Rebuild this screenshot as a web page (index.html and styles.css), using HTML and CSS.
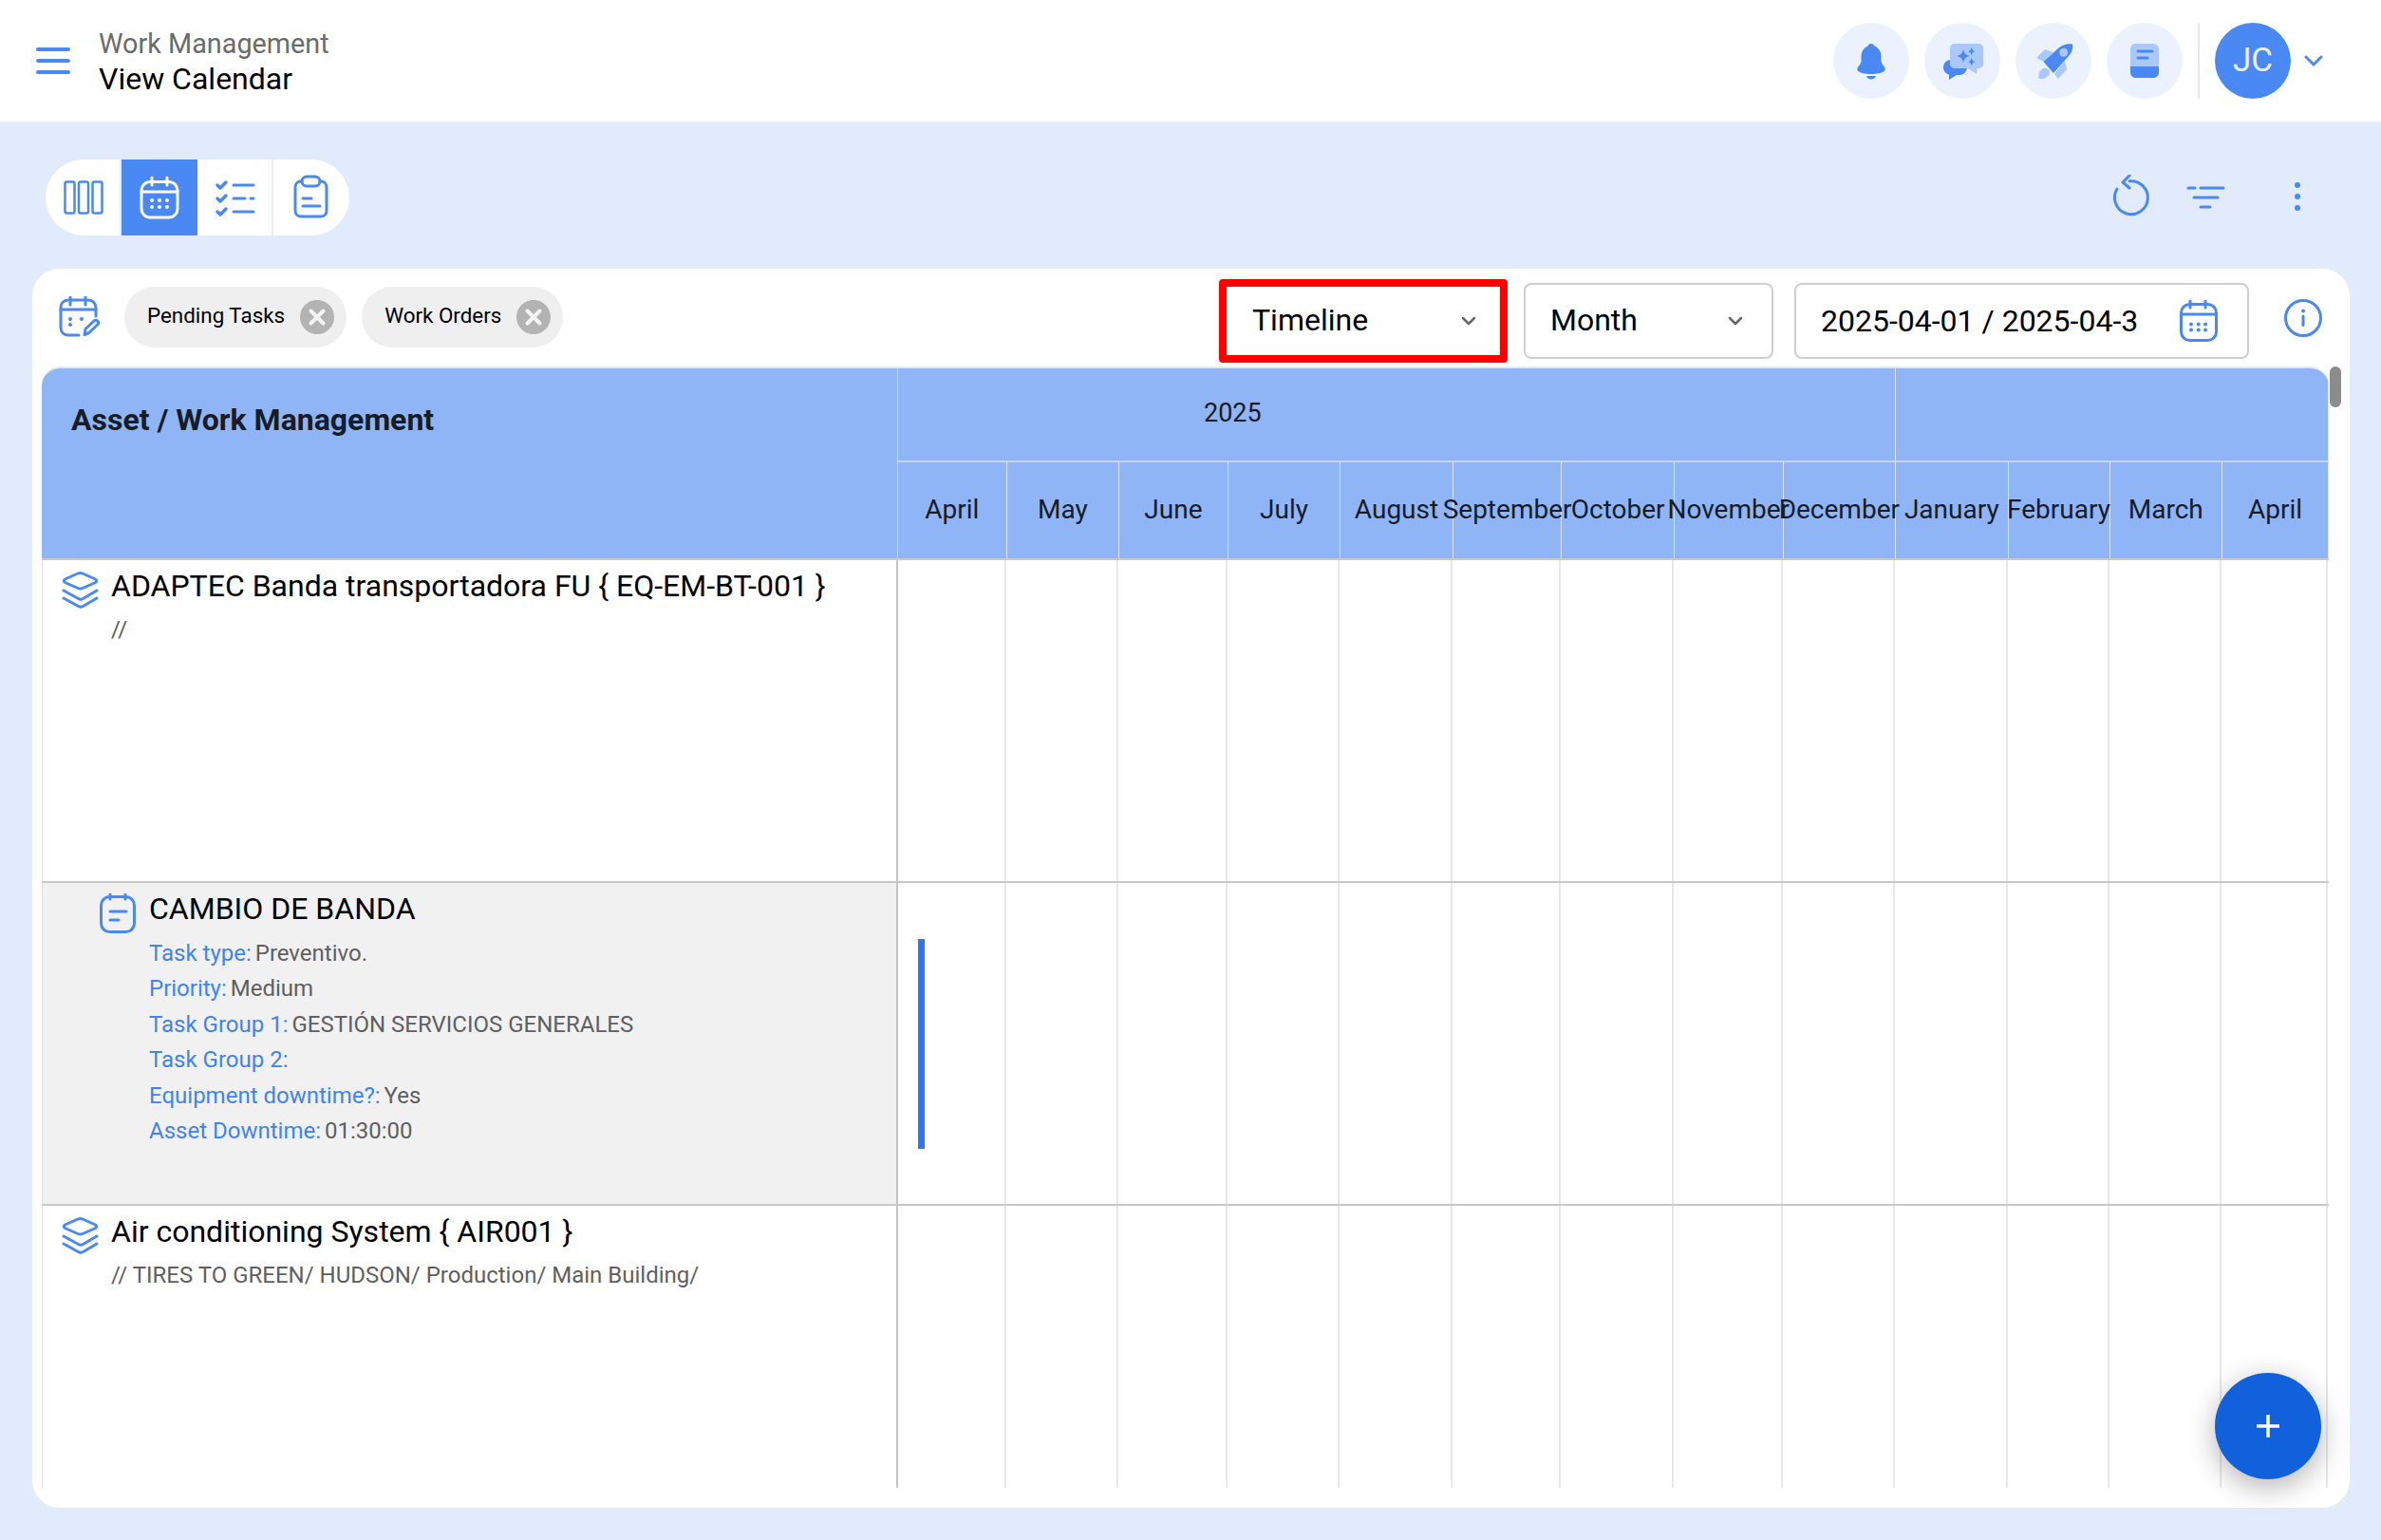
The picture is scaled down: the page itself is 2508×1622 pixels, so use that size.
FILE: index.html
```html
<!DOCTYPE html>
<html lang="en">
<head>
  <meta charset="UTF-8" />
  <title>View Calendar</title>
  <link rel="stylesheet" href="styles.css">
</head>
<body>

  <header class="topbar">
    <svg class="menu-icon" width="36" height="28" viewBox="0 0 36 28"><path d="M2 2h32M2 14h32M2 26h32"/></svg>
    <div class="page-title">
      <div class="crumb">Work Management</div>
      <div class="current">View Calendar</div>
    </div>
    <div class="top-actions">
      <button class="round-btn">
        <svg width="80" height="80" viewBox="0 0 80 80" class="dark"><path d="M40 22c-2 0-3 1.200-3.500 2.500C32.500 26 29.500 30 29.500 35v5c0 3-3 5.500-4 7.500-.8 2 .5 3.500 2.500 4.500 3.500 1.500 8 2 12 2s8.500-.5 12-2c2-1 3.300-2.500 2.500-4.500-1-2-4-4.500-4-7.500v-5c0-5-3-9-7-10.500C43 23.200 42 22 40 22z"/><path d="M35 56h10c-1 2.800-3 3.500-5 3.500s-4-.7-5-3.500z"/></svg>
      </button>
      <button class="round-btn">
        <svg width="80" height="80" viewBox="0 0 80 80">
          <path class="dark" d="M28 39h9c4.500 0 8 3 8 7.500s-3.500 8.500-8 8.500h-3l-8 5v-5.500c-3.500-.5-6-4-6-7.500 0-4.500 3.500-8 8-8z"/>
          <path class="light" d="M32 22h25c3 0 5 2 5 5v16c0 3-2 5-5 5h-1.500l-.5 6-9-6H32c-3 0-5-2-5-5V27c0-3 2-5 5-5z"/>
          <path class="dark" d="M41 28q1 6 7 7q-6 1-7 7q-1-6-7-7q6-1 7-7zM49.700 26q.5 3 3.500 4q-3 1-3.500 4q-.5-3-3.500-4q3-1 3.500-4zM49.700 37q.5 3 3.500 4q-3 1-3.500 4q-.5-3-3.500-4q3-1 3.500-4z"/>
        </svg>
      </button>
      <button class="round-btn">
        <svg width="80" height="80" viewBox="0 0 80 80">
          <path class="light" d="M22 37l9-9 9 3-10.500 10zM54 49l-9 10-4-5 11-14zM25 59c-1.500-4 0-9 4-11 3-1 7 1 7 4 0 4-5 8-11 7z"/>
          <path class="dark" d="M60 22.500c-5-1-10 .5-14 3.500L29.500 41 40 53 56 35c3-3 5-8 4-12.500z"/>
          <circle class="light" cx="50.700" cy="31.300" r="4.500"/>
        </svg>
      </button>
      <button class="round-btn">
        <svg width="80" height="80" viewBox="0 0 80 80">
          <path class="light" d="M31 22h18c3.500 0 6 2.500 6 6v19H25V28c0-3.500 2.500-6 6-6z"/>
          <path class="dark" d="M25 46h30v6c0 3.500-2.500 6-6 6H31c-3.500 0-6-2.500-6-6z"/>
          <path class="dark-line" d="M33 30h15M33 37h10"/>
        </svg>
      </button>
      <div class="top-sep"></div>
      <div class="avatar">JC</div>
      <svg class="avatar-caret" width="20" height="14" viewBox="0 0 20 14"><path d="M2 3l8 8 8-8"/></svg>
    </div>
  </header>

  <div class="toolbar">
    <div class="view-switch">
      <button class="view-btn view-columns">
        <svg width="80" height="80" viewBox="0 0 80 80"><rect x="20.500" y="23.500" width="10" height="33" rx="2"/><rect x="35" y="23.500" width="10" height="33" rx="2"/><rect x="49.500" y="23.500" width="10" height="33" rx="2"/></svg>
      </button>
      <button class="view-btn active">
        <svg width="80" height="80" viewBox="0 0 80 80"><rect x="21" y="23.500" width="38" height="37.500" rx="9"/><path d="M32 19v8M48 19v8M21 34h38"/><path class="dots" d="M32 43h.01M40 43h.01M48 43h.01M32 50h.01M40 50h.01M48 50h.01"/></svg>
      </button>
      <button class="view-btn">
        <svg width="80" height="80" viewBox="0 0 80 80"><path class="checks" d="M21 27l3 3 6-6M21 41l3 3 6-6M21 55l3 3 6-6"/><path d="M38 27h21M38 41h12M56 41h3M38 55h21"/></svg>
      </button>
      <button class="view-btn">
        <svg width="80" height="80" viewBox="0 0 80 80"><path d="M30 23h-1c-4 0-6 3-6 6v25c0 4 3 6 6 6h21c4 0 6-3 6-6V29c0-3-2-6-6-6h-1"/><rect x="30" y="18" width="19" height="10" rx="5"/><path d="M31 41h9M31 49h18"/></svg>
      </button>
    </div>
    <div class="tool-actions">
      <svg width="48" height="48" viewBox="0 0 48 48"><path d="M9 15A17.500 17.500 0 1 0 22 6.800"/><path d="M22 1l-7 7 7 6"/></svg>
      <svg class="tool-filter" width="48" height="48" viewBox="0 0 48 48"><path d="M5 14h7M18 14h24M11 24h25M18 34h10"/></svg>
      <svg class="tool-more" width="20" height="48" viewBox="0 0 20 48"><path d="M10 11h.01M10 23h.01M10 35h.01"/></svg>
    </div>
  </div>

  <main class="card">
    <div class="filters">
      <svg class="cal-edit" width="44" height="44" viewBox="0 0 44 44">
        <path d="M21 41H10c-4.500 0-8-3-8-8V12c0-4.500 3-8 8-8h21c4.500 0 8 3.500 8 8v9"/>
        <path d="M12 1v8M28 1v8M2 14h37"/>
        <path class="cal-dots" d="M12 24h.01M24 24h.01M12 30h.01"/>
        <path d="M27 40.500l1-6 9-8.500c1.200-1.100 3-1 4 .2s.8 2.800-.3 3.800l-9 8.500z"/>
      </svg>
      <div class="chip">
        <span>Pending Tasks</span>
        <svg class="chip-close" width="36" height="36" viewBox="0 0 36 36"><circle cx="18" cy="18" r="18"/><path d="M11.500 11.500l13 13M24.500 11.500l-13 13"/></svg>
      </div>
      <div class="chip">
        <span>Work Orders</span>
        <svg class="chip-close" width="36" height="36" viewBox="0 0 36 36"><circle cx="18" cy="18" r="18"/><path d="M11.500 11.500l13 13M24.500 11.500l-13 13"/></svg>
      </div>

      <div class="select select-mode">
        <span>Timeline</span>
        <svg width="16" height="10" viewBox="0 0 16 10"><path d="M2 2l6 6 6-6"/></svg>
      </div>
      <div class="select select-range">
        <span>Month</span>
        <svg width="16" height="10" viewBox="0 0 16 10"><path d="M2 2l6 6 6-6"/></svg>
      </div>
      <div class="select select-date">
        <span>2025-04-01 / 2025-04-3</span>
        <svg class="date-icon" width="40" height="44" viewBox="0 0 40 44"><rect x="1.500" y="4.500" width="37" height="38" rx="9"/><path d="M11 1v7M27 1v7M1.500 15h37"/><path class="date-dots" d="M12 25.500h.01M19.700 25.500h.01M27 25.500h.01M12 31.500h.01M19.700 31.500h.01M27 31.500h.01"/></svg>
      </div>
      <svg class="info-icon" width="40" height="40" viewBox="0 0 40 40"><circle cx="20" cy="20" r="18.500"/><path d="M20 18v9.500"/><path class="info-dot" d="M20 12.500h.01"/></svg>
    </div>

    <div class="table">
      <div class="thead">
        <div class="th-main">Asset / Work Management</div>
        <div class="th-year year-2025">2025</div>
        <div class="th-year year-2026"></div>
        <div class="th-month">April</div>
        <div class="th-month">May</div>
        <div class="th-month">June</div>
        <div class="th-month">July</div>
        <div class="th-month">August</div>
        <div class="th-month">September</div>
        <div class="th-month">October</div>
        <div class="th-month">November</div>
        <div class="th-month">December</div>
        <div class="th-month">January</div>
        <div class="th-month">February</div>
        <div class="th-month">March</div>
        <div class="th-month">April</div>
      </div>

      <div class="row row-asset">
        <div class="cell-main">
          <div class="row-title">
            <svg class="stack-icon" width="40" height="40" viewBox="0 0 40 40"><path d="M18 3L4.500 9c-1.500 1-1.500 2.500 0 3.500L18 18.500c1.500.7 3.500.7 5 0l13.500-6c1.500-1 1.500-2.500 0-3.500L23 3c-1.500-.7-3.500-.7-5 0z"/><path d="M3 21l15.500 8.500c1.500.8 3.500.8 5 0L38 21"/><path d="M3 29l15.500 8.500c1.500.8 3.500.8 5 0L38 29"/></svg>
            <span>ADAPTEC Banda transportadora FU { EQ-EM-BT-001 }</span>
          </div>
          <div class="row-path">//</div>
        </div>
        <div class="cell"></div><div class="cell"></div><div class="cell"></div><div class="cell"></div><div class="cell"></div><div class="cell"></div><div class="cell"></div><div class="cell"></div><div class="cell"></div><div class="cell"></div><div class="cell"></div><div class="cell"></div><div class="cell"></div>
      </div>

      <div class="row row-task">
        <div class="cell-main">
          <div class="row-title">
            <svg class="task-icon" width="39" height="42" viewBox="0 0 39 42"><rect x="1.500" y="3.500" width="35" height="37" rx="9"/><path d="M11 1v5M27 1v5M11 19h17M11 28h9"/></svg>
            <span>CAMBIO DE BANDA</span>
          </div>
          <ul class="task-info">
            <li><b>Task type:</b> Preventivo.</li>
            <li><b>Priority:</b> Medium</li>
            <li><b>Task Group 1:</b> GESTIÓN SERVICIOS GENERALES</li>
            <li><b>Task Group 2:</b></li>
            <li><b>Equipment downtime?:</b> Yes</li>
            <li><b>Asset Downtime:</b> 01:30:00</li>
          </ul>
        </div>
        <div class="cell"><div class="task-bar"></div></div><div class="cell"></div><div class="cell"></div><div class="cell"></div><div class="cell"></div><div class="cell"></div><div class="cell"></div><div class="cell"></div><div class="cell"></div><div class="cell"></div><div class="cell"></div><div class="cell"></div><div class="cell"></div>
      </div>

      <div class="row row-last">
        <div class="cell-main">
          <div class="row-title">
            <svg class="stack-icon" width="40" height="40" viewBox="0 0 40 40"><path d="M18 3L4.500 9c-1.500 1-1.500 2.500 0 3.500L18 18.500c1.500.7 3.500.7 5 0l13.500-6c1.500-1 1.500-2.500 0-3.500L23 3c-1.500-.7-3.500-.7-5 0z"/><path d="M3 21l15.500 8.500c1.500.8 3.500.8 5 0L38 21"/><path d="M3 29l15.500 8.500c1.500.8 3.500.8 5 0L38 29"/></svg>
            <span>Air conditioning System { AIR001 }</span>
          </div>
          <div class="row-path">// TIRES TO GREEN/ HUDSON/ Production/ Main Building/</div>
        </div>
        <div class="cell"></div><div class="cell"></div><div class="cell"></div><div class="cell"></div><div class="cell"></div><div class="cell"></div><div class="cell"></div><div class="cell"></div><div class="cell"></div><div class="cell"></div><div class="cell"></div><div class="cell"></div><div class="cell"></div>
      </div>
    </div>

    <div class="scroll-thumb"></div>
    <button class="fab">
      <svg width="26" height="26" viewBox="0 0 26 26"><path d="M13 1v24M1 13h24"/></svg>
    </button>
  </main>

</body>
</html>
```

FILE: styles.css
```css
* {
  box-sizing: border-box;
}

body {
  margin: 0;
  height: 1622px;
  overflow: hidden;
  background-color: #e2ebfc;
  font-family: Roboto, "Liberation Sans", sans-serif;
  color: #000;
}

button {
  border: none;
  padding: 0;
  background: none;
  display: block;
}

svg {
  display: block;
  fill: none;
  stroke-linecap: round;
  stroke-linejoin: round;
}

/* top bar */
.topbar {
  display: flex;
  align-items: center;
  height: 128px;
  padding: 0 61px 0 38px;
  background-color: #fff;
}

.menu-icon {
  stroke: #4a89f3;
  stroke-width: 4;
}

.page-title {
  margin-left: 30px;
  padding-top: 2px;
}

.crumb {
  font-size: 28.800px;
  line-height: 37px;
  color: #6b6b6b;
}

.current {
  font-size: 32px;
  line-height: 37px;
}

.top-actions {
  display: flex;
  align-items: center;
  margin-left: auto;
  gap: 16px;
}

.round-btn {
  width: 80px;
  height: 80px;
  border-radius: 50%;
  background-color: #ebf2fe;
}

.dark {
  fill: #4a89f3;
}

.light {
  fill: #abc8fa;
}

.dark-line {
  stroke: #4a89f3;
  stroke-width: 3;
}

.top-sep {
  width: 2px;
  height: 80px;
  background-color: #e8e8e8;
}

.avatar {
  width: 80px;
  height: 80px;
  border-radius: 50%;
  background-color: #4a89f3;
  color: #e8f0fe;
  font-size: 35px;
  line-height: 80px;
  text-align: center;
}

.avatar-caret {
  margin-left: -2px;
  stroke: #4a89f3;
  stroke-width: 3;
}

/* view switch row */
.toolbar {
  display: flex;
  align-items: center;
  justify-content: space-between;
  height: 154px;
  padding: 40px 78px 34px 48px;
}

.view-switch {
  display: flex;
  width: 320px;
  height: 80px;
  border-radius: 40px;
  overflow: hidden;
  background-color: #fff;
}

.view-btn {
  width: 80px;
  height: 80px;
  border-right: 2px solid #e8effc;
}

.view-btn:last-child {
  border-right: none;
}

.view-btn svg {
  stroke: #4a89f3;
  stroke-width: 3;
}

.view-columns svg {
  stroke-width: 2.500;
}

.view-btn .checks {
  stroke-width: 3.500;
}

.view-btn.active {
  background-color: #4a89f3;
  border-right: none;
}

.view-btn.active svg {
  stroke: #fff;
}

.view-btn .dots {
  stroke-width: 4;
}

.tool-actions {
  display: flex;
  align-items: center;
  gap: 31px;
}

.tool-actions svg {
  stroke: #4a89f3;
  stroke-width: 3;
}

.tool-filter {
  margin-right: 31px;
}

.tool-actions .tool-more {
  stroke-width: 6;
}

/* card */
.card {
  position: relative;
  width: 2443px;
  height: 1307px;
  margin-left: 33px;
  padding: 0 9px 0 10px;
  border: 1px solid #ececec;
  border-radius: 30px;
  background-color: #fff;
}

.filters {
  display: flex;
  align-items: flex-start;
  height: 103px;
  padding-left: 18px;
}

.cal-edit {
  margin-top: 29px;
  margin-right: 25px;
  stroke: #4a89f3;
  stroke-width: 3;
}

.cal-edit .cal-dots {
  stroke-width: 4;
}

.chip {
  display: flex;
  align-items: center;
  gap: 16px;
  height: 64px;
  margin-top: 19px;
  margin-right: 16px;
  padding: 0 13px 0 24px;
  border-radius: 32px;
  background-color: #efefef;
  font-size: 22.400px;
}

.chip span {
  margin-top: -5px;
}

.chip-close circle {
  fill: #b3b3b3;
}

.chip-close path {
  stroke: #f4f4f4;
  stroke-width: 4;
}

.select {
  display: flex;
  align-items: center;
  justify-content: space-between;
  height: 80px;
  margin-top: 15px;
  padding: 0 16px 0 26px;
  border: 2px solid #cfcfcf;
  border-radius: 8px;
  font-size: 32px;
}

.select svg {
  stroke: #666;
  stroke-width: 2.500;
}

.select-mode {
  width: 304px;
  height: 88px;
  margin-top: 11px;
  margin-left: auto;
  padding: 0 25px 0 27px;
  border: 8px solid #f00;
  border-radius: 4px;
}

.select-mode span {
  margin-top: -2px;
}

.select-range {
  width: 263px;
  margin-left: 17px;
  padding-right: 30px;
}

.select-range span {
  margin-top: -2px;
}

.select-date {
  width: 479px;
  margin-left: 22px;
  padding-right: 31px;
}

.select-date .date-icon {
  stroke: #4a89f3;
  stroke-width: 3;
}

.date-icon .date-dots {
  stroke-width: 4;
}

.info-icon {
  margin-top: 32px;
  margin-left: 37px;
  margin-right: 20px;
  stroke: #4a89f3;
  stroke-width: 3;
}

.info-icon .info-dot {
  stroke-width: 4;
}

/* table */
.table {
  --cols: 902px 30fr 31fr 30fr 31fr 31fr 30fr 31fr 30fr 31fr 31fr 28fr 31fr 29.300fr;
  width: 2409px;
  height: 1181px;
  overflow: hidden;
  border-top: 2px solid #e6e6e6;
  border-top-left-radius: 20px;
  border-top-right-radius: 20px;
  display: flex;
  flex-direction: column;
}

.thead {
  display: grid;
  grid-template-columns: var(--cols);
  grid-template-rows: 99px 101px;
  flex: none;
  background-color: #8fb5f7;
  color: #171c26;
}

.th-main {
  grid-row: 1 / 3;
  padding: 33px 0 0 31px;
  border-right: 1px solid #c9dafa;
  font-size: 32px;
  font-weight: 700;
  line-height: 42px;
}

.th-year {
  min-width: 0;
  border-bottom: 2px solid #c2d5f7;
  border-right: 1px solid #d9e5fb;
  font-size: 27px;
  line-height: 94px;
}

.year-2025 {
  grid-column: span 9;
  padding-left: 322px;
}

.year-2026 {
  grid-column: span 4;
}

.th-month {
  min-width: 0;
  border-right: 1px solid #d9e5fb;
  font-size: 28px;
  line-height: 100px;
  white-space: nowrap;
  display: flex;
  justify-content: center;
}

.row {
  display: grid;
  grid-template-columns: var(--cols);
  flex: none;
  height: 340px;
  border-top: 2px solid #c8c8c8;
}

.row-last {
  flex: 1;
}

.cell-main {
  padding-top: 7px;
  border-left: 1px solid #e0e0e0;
  border-right: 2px solid #c4c4c4;
}

.row-task .cell-main {
  background-color: #f1f1f1;
}

.cell {
  min-width: 0;
  margin-right: 1px;
  border-right: 2px solid #e8e8e8;
}

.row-title {
  display: flex;
  align-items: flex-start;
  height: 40px;
  padding-left: 19px;
  font-size: 32px;
  line-height: 40px;
}

.row-title .stack-icon {
  margin-top: 4px;
  margin-right: 13px;
  stroke: #4a89f3;
  stroke-width: 3;
}

.row-path {
  margin-top: 11px;
  padding-left: 72px;
  font-size: 24px;
  line-height: 30px;
  color: #5f5f5f;
}

.row-task .row-title {
  padding-left: 60px;
}

.row-title .task-icon {
  margin-top: 4px;
  margin-right: 13px;
  stroke: #4a89f3;
  stroke-width: 3;
}

.task-info {
  list-style: none;
  margin: 9px 0 0;
  padding: 0 0 0 112px;
  font-size: 24px;
  line-height: 37.400px;
  color: #5f5f5f;
}

.task-info b {
  margin-right: -2px;
  font-weight: 400;
  color: #3f83f4;
}

.task-bar {
  width: 7px;
  height: 221px;
  margin: 59px 0 0 21px;
  background-color: #2f77f2;
}

.scroll-thumb {
  position: absolute;
  top: 103px;
  right: 9px;
  width: 12px;
  height: 43px;
  border-radius: 6px;
  background-color: #8c8c8c;
}

.fab {
  position: absolute;
  top: 1163px;
  left: 2299px;
  display: flex;
  align-items: center;
  justify-content: center;
  width: 112px;
  height: 112px;
  border-radius: 50%;
  background-color: #1160dc;
  box-shadow: 0 8px 30px rgba(0, 0, 0, 0.3);
}

.fab svg {
  stroke: #fff;
  stroke-width: 3.500;
  stroke-linecap: butt;
}
```
